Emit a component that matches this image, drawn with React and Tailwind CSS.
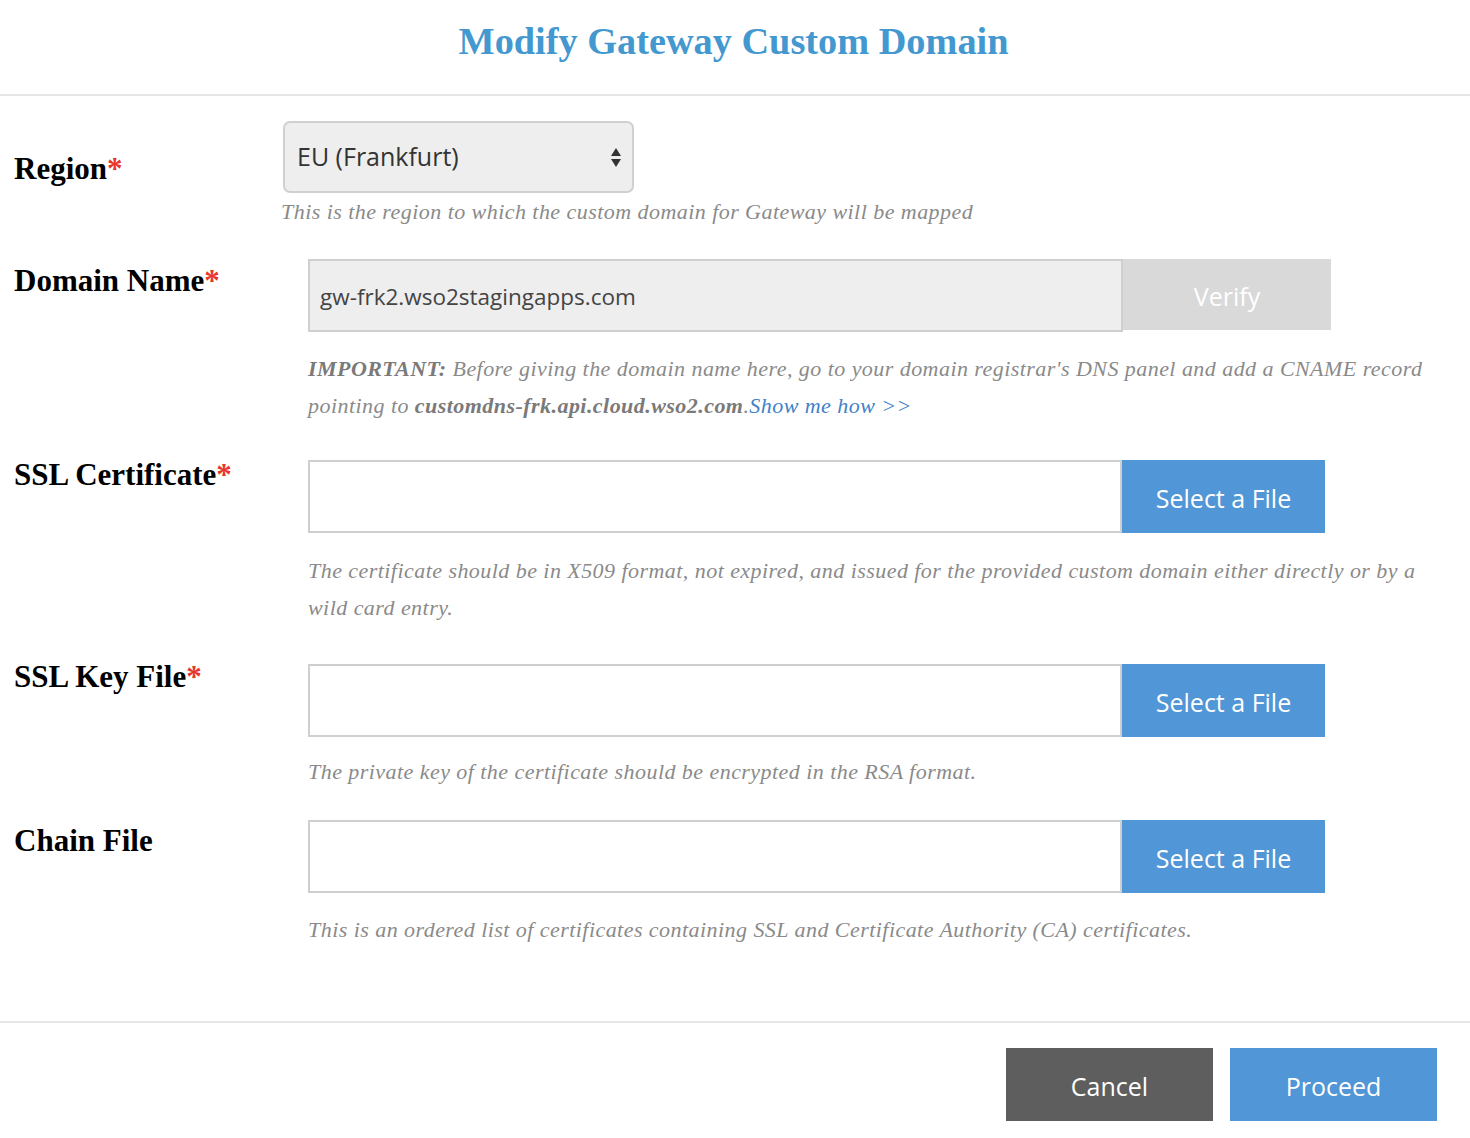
import React from "react";

const serif = { fontFamily: '"Liberation Serif", "Times New Roman", serif' };
const sans = { fontFamily: '"Open Sans", "Noto Sans", sans-serif' };

function Label({ children, required, className = "" }) {
  return (
    <div
      className={`text-[31px] leading-[36px] font-bold text-black ${className}`}
      style={serif}
    >
      {children}
      {required && <span className="text-[#e8352b]">*</span>}
    </div>
  );
}

function Help({ children, className = "" }) {
  return (
    <p
      className={`text-[22px] leading-[37px] italic tracking-[0.45px] text-[#8a8a8a] whitespace-nowrap ${className}`}
      style={serif}
    >
      {children}
    </p>
  );
}

function FileField() {
  return (
    <div className="flex h-[73px]">
      <div className="w-[814px] h-full border-2 border-[#cfcfcf] bg-white" />
      <button
        className="w-[203px] h-full pt-[5px] bg-[#5196d6] text-white text-[25px]"
        style={sans}
      >
        Select a File
      </button>
    </div>
  );
}

export default function App() {
  return (
    <div className="w-[1470px] h-[1138px] bg-white overflow-hidden flex flex-col">
      <div className="h-[96px] border-b-2 border-[#e6e6e6] flex justify-center shrink-0">
        <h1
          className="pt-[19px] pr-[3px] text-[38.3px] leading-[44px] font-bold text-[#4498d0]"
          style={serif}
        >
          Modify Gateway Custom Domain
        </h1>
      </div>

      <div className="pl-[14px] flex flex-col">
        {/* Region */}
        <div className="flex mt-[25px]">
          <Label required className="w-[269px] pt-[30px]">
            Region
          </Label>
          <div className="flex flex-col">
            <div
              className="w-[351px] h-[72px] rounded-[7px] border-2 border-[#d0d0d0] bg-[#eeeeee] flex items-center justify-between pl-[12px] pr-[10px]"
              style={sans}
            >
              <span className="text-[25px] text-[#333333]">EU (Frankfurt)</span>
              <svg width="12" height="24" viewBox="0 0 12 24">
                <path d="M6 3 L11 11 L1 11 Z" fill="#333" />
                <path d="M1 14 L11 14 L6 22 Z" fill="#333" />
              </svg>
            </div>
            <Help className="-ml-[2px]">This is the region to which the custom domain for Gateway will be mapped</Help>
          </div>
        </div>

        {/* Domain Name */}
        <div className="flex mt-[29px]">
          <Label required className="w-[294px] pt-[4px]">
            Domain Name
          </Label>
          <div className="flex flex-col">
            <div className="flex h-[73px]">
              <div
                className="w-[815px] h-full pt-[3px] border-2 border-[#cfcfcf] bg-[#eeeeee] flex items-center pl-[10px] text-[22.5px] text-[#444444]"
                style={sans}
              >
                gw-frk2.wso2stagingapps.com
              </div>
              <button
                className="w-[208px] h-[71px] pt-[5px] bg-[#d9d9d9] text-white text-[25px]"
                style={sans}
              >
                Verify
              </button>
            </div>
            <Help className="mt-[18px]">
              <span className="font-bold text-[#7a7a7a]">IMPORTANT:</span> Before giving the domain name here, go to your domain registrar's DNS panel and add a CNAME record
              <br />
              pointing to <span className="font-bold text-[#7a7a7a]">customdns-frk.api.cloud.wso2.com</span>.
              <span className="text-[#3f82c8]">Show me how &gt;&gt;</span>
            </Help>
          </div>
        </div>

        {/* SSL Certificate */}
        <div className="flex mt-[36px]">
          <Label required className="w-[294px] mt-[-3px]">
            SSL Certificate
          </Label>
          <div className="flex flex-col">
            <FileField />
            <Help className="mt-[19px]">
              The certificate should be in X509 format, not expired, and issued for the provided custom domain either directly or by a
              <br />
              wild card entry.
            </Help>
          </div>
        </div>

        {/* SSL Key File */}
        <div className="flex mt-[38px]">
          <Label required className="w-[294px] mt-[-5px]">
            SSL Key File
          </Label>
          <div className="flex flex-col">
            <FileField />
            <Help className="mt-[16px]">
              The private key of the certificate should be encrypted in the RSA format.
            </Help>
          </div>
        </div>

        {/* Chain File */}
        <div className="flex mt-[30px]">
          <Label className="w-[294px] pt-[3px]">Chain File</Label>
          <div className="flex flex-col">
            <FileField />
            <Help className="mt-[18px]">
              This is an ordered list of certificates containing SSL and Certificate Authority (CA) certificates.
            </Help>
          </div>
        </div>
      </div>

      <div className="mt-[73px] border-t-2 border-[#e6e6e6] pt-[25px] pr-[33px] flex justify-end gap-[17px]">
        <button
          className="w-[207px] h-[73px] pt-[5px] bg-[#5e5e5e] text-white text-[25px]"
          style={sans}
        >
          Cancel
        </button>
        <button
          className="w-[207px] h-[73px] pt-[5px] bg-[#5196d6] text-white text-[25px]"
          style={sans}
        >
          Proceed
        </button>
      </div>
    </div>
  );
}
